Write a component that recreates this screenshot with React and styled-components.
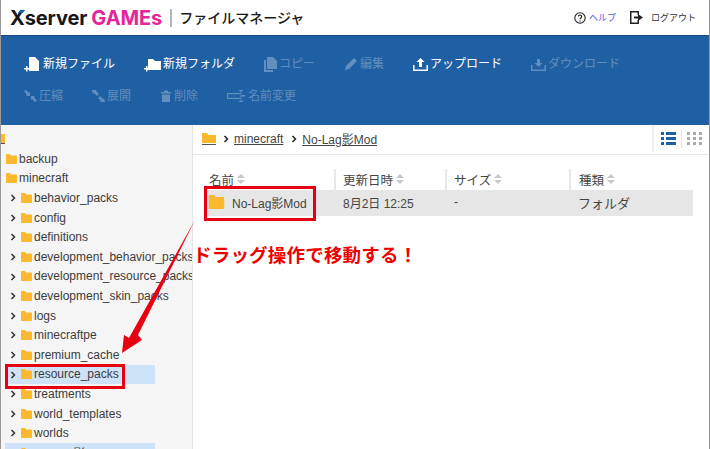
import React from 'react';
import styled, { createGlobalStyle } from 'styled-components';

const GlobalStyle = createGlobalStyle`
    html, body { margin: 0; padding: 0; background: #fff; }
    body { font-family: "Liberation Sans", "Noto Sans CJK JP", sans-serif; color: #333; }
`;

const Page = styled.div`
    position: relative;
    width: 710px;
    height: 449px;
    box-sizing: border-box;
    border-left: 1px solid #999;
    border-right: 1px solid #999;
    overflow: hidden;
    display: flex;
    flex-direction: column;
    background: #fff;
`;

const Header = styled.header`
    height: 35px;
    flex: none;
    display: flex;
    align-items: center;
    padding: 0 13px 0 9px;
    background: #fff;
`;

const Logo = styled.div`
    font-family: Inter, "Liberation Sans", sans-serif;
    font-weight: 700;
    font-size: 20px;
    letter-spacing: -0.1px;
    color: #16161a;
    white-space: nowrap;
`;

const LogoGames = styled.span`
    color: #e5259b;
    margin-left: 4px;
`;

const LogoX = styled.span`
    position: relative;
    &::after {
        content: '';
        position: absolute;
        left: 9px;
        top: 4px;
        width: 5px;
        height: 3px;
        background: #1f5fa3;
        transform: skewX(-40deg);
    }
`;

const Title = styled.div`
    margin-left: 8px;
    padding-left: 7px;
    border-left: 2px solid #b5b5b5;
    font-size: 14px;
    line-height: 18px;
    font-weight: 500;
    color: #1a1a1a;
    white-space: nowrap;
`;

const HeadLinks = styled.nav`
    margin-left: auto;
    display: flex;
    align-items: center;
`;

const HeadLink = styled.a`
    display: flex;
    align-items: center;
    gap: ${({ $gap }) => $gap}px;
    margin-left: ${({ $left }) => $left}px;
    font-size: 9px;
    color: ${({ $color }) => $color};
    white-space: nowrap;
`;

const Toolbar = styled.div`
    height: 90px;
    flex: none;
    box-sizing: border-box;
    border-top: 1px solid #174a80;
    background: #1f5fa3;
    padding: 19px 0 0 23px;
    display: flex;
    flex-direction: column;
    gap: 14px;
`;

const ToolRow = styled.div`
    display: flex;
    gap: 29px;
    height: 18px;
`;

const ToolButton = styled.button`
    display: flex;
    align-items: center;
    gap: 2px;
    padding: 0;
    border: none;
    background: none;
    font: inherit;
    font-size: 12px;
    line-height: 18px;
    white-space: nowrap;
    color: ${({ $off }) => ($off ? 'rgba(255,255,255,.3)' : '#fff')};
    svg { flex: none; fill: currentColor; }
`;

const Body = styled.div`
    flex: 1;
    display: flex;
    min-height: 0;
`;

const Sidebar = styled.aside`
    width: 192px;
    flex: none;
    box-sizing: border-box;
    border-right: 1px solid #e4e4e4;
    background: #f5f5f5;
    overflow: hidden;
    padding-top: 24px;
    position: relative;
`;

const TreeRow = styled.div`
    height: 19.6px;
    box-sizing: border-box;
    width: ${({ $hit }) => ($hit ? '150px' : 'auto')};
    margin-left: ${({ $hit }) => ($hit ? '4px' : '0')};
    padding-left: ${({ $depth, $hit }) => ($depth ? 20 : 5) - ($hit ? 4 : 0)}px;
    display: flex;
    align-items: center;
    gap: 2px;
    position: relative;
    font-size: 12px;
    white-space: nowrap;
    color: #3c3c3c;
    background: ${({ $hit }) => ($hit ? '#cfe3f8' : 'transparent')};
`;

const Chevron = styled.svg`
    position: absolute;
    left: ${({ $hit }) => ($hit ? 5 : 9)}px;
    top: 6px;
`;

const CutFolder = styled.div`
    position: absolute;
    left: -1px;
    top: 9px;
    width: 5px;
    height: 9px;
    background: #fdb92e;
    border-bottom: 1px solid #555;
`;

const Main = styled.main`
    flex: 1;
    min-width: 0;
    display: flex;
    flex-direction: column;
`;

const Crumbs = styled.div`
    height: 30px;
    flex: none;
    box-sizing: border-box;
    border-bottom: 1px solid #e6e6e6;
    display: flex;
    align-items: center;
    padding: 0 0 2px 9px;
`;

const CrumbFolder = styled.svg`
    flex: none;
    margin-right: 7px;
`;

const CrumbLink = styled.a`
    font-size: 12px;
    color: #444;
    text-decoration: underline;
    margin-left: 4px;
    margin-right: 8px;
    white-space: nowrap;
`;

const ViewSwitch = styled.div`
    margin-left: auto;
    height: 100%;
    border-left: 2px solid #eee;
    display: flex;
    align-items: center;
    padding: 0 7px 0 7px;
    gap: 5px;
`;

const ViewDivider = styled.i`
    width: 1px;
    height: 18px;
    background: #e4e4e4;
`;

const Table = styled.div`
    margin: 14px 0 0 11px;
    width: 489px;
`;

const GridRow = styled.div`
    display: grid;
    grid-template-columns: 130px 111px 124px 124px;
    align-items: center;
    height: ${({ $h }) => $h}px;
    background: ${({ $hit }) => ($hit ? '#e6e6e6' : 'transparent')};
`;

const HeadCell = styled.div`
    height: 100%;
    box-sizing: border-box;
    display: flex;
    align-items: center;
    gap: 3px;
    padding: 0 0 1px 5px;
    font-size: 12.5px;
    color: #444;
    & + & { border-left: 2px solid #e8e8e8; padding-left: 7px; }
    &:last-child { padding-left: 8px; }
`;

const Cell = styled.div`
    display: flex;
    align-items: center;
    gap: 7px;
    padding-left: ${({ $pad }) => $pad}px;
    padding-bottom: 2px;
    font-size: ${({ $size }) => $size || 12}px;
    color: #444;
    white-space: nowrap;
`;

const RedBox = styled.div`
    position: absolute;
    box-sizing: border-box;
    border: 3px solid #e60012;
    left: ${({ $x }) => $x}px;
    top: ${({ $y }) => $y}px;
    width: ${({ $w }) => $w}px;
    height: ${({ $h }) => $h}px;
`;

const Callout = styled.div`
    position: absolute;
    left: 192px;
    top: 243px;
    font-size: 18.500px;
    line-height: 26px;
    font-weight: 700;
    letter-spacing: 0.2px;
    color: #ee0000;
    white-space: nowrap;
`;

const ArrowArt = styled.svg`
    position: absolute;
    left: -1px;
    top: 0;
    pointer-events: none;
`;

const FileIcon = () => (
    <svg width="17" height="18" viewBox="0 0 17 18">
        <path d="M5 2h6l4 4v10H5z" />
        <path d="M0 13h2v-2h1.500v2h2v1.500h-2v2H2v-2H0z" />
    </svg>
);
const NewFolderIcon = () => (
    <svg width="17" height="18" viewBox="0 0 17 18">
        <path d="M4 4h5l2 2h6v9H4z" />
        <path d="M0 13h2v-2h1.500v2h2v1.500h-2v2H2v-2H0z" />
    </svg>
);
const CopyIcon = () => (
    <svg width="13" height="16" viewBox="0 0 13 16">
        <path d="M3 1h6l4 4v8H3z" />
        <path d="M0 4h2v10h7v2H0z" />
    </svg>
);
const PenIcon = () => (
    <svg width="14" height="16" viewBox="0 0 14 16">
        <path d="M10 2l3 3-8 8-4 1 1-4z" />
    </svg>
);
const TrayIcon = ({ down }) => (
    <svg width="15" height="16" viewBox="0 0 15 16">
        <path d="M0 9h1.500v4.500h12V9H15v6H0z" />
        {down
            ? <path d="M6 3h3v4h2.500l-4 4-4-4H6z" />
            : <path d="M7.500 2l4 4H9v5H6V6H3.500z" />}
    </svg>
);
const SqueezeIcon = () => (
    <svg width="13" height="16" viewBox="0 0 13 16">
        <path d="M0 3l2-1 3 3 1-1 0 4-4 0 1-1zM13 13l-2 1-3-3-1 1 0-4 4 0-1 1z" />
    </svg>
);
const ExpandIcon = () => (
    <svg width="13" height="16" viewBox="0 0 13 16">
        <path d="M0 2h5L4 3l3 3-2 2-3-3-1 1zM13 14H8l1-1-3-3 2-2 3 3 1-1z" />
    </svg>
);
const TrashIcon = () => (
    <svg width="12" height="16" viewBox="0 0 12 16">
        <path d="M1 4h10v1.500H1zM4 2.500h4V4H4zM2 6.500h8V14H2z" />
    </svg>
);
const RenameIcon = () => (
    <svg width="19" height="16" viewBox="0 0 19 16">
        <path d="M0 5h13v1.200H1.200v3.600H13V11H0z" />
        <path d="M12 2h4v1h-1.500v10H16v1h-4v-1h1.500V3H12z" />
        <path d="M15 7h3v1.500h-3z" />
    </svg>
);

const FolderIcon = ({ w = 11, h = 10 }) => (
    <svg width={w} height={h} viewBox="0 0 11 10" style={{ flex: 'none' }}>
        <path d="M0 1a1 1 0 0 1 1-1h3l1 1.500h5a1 1 0 0 1 1 1V9a1 1 0 0 1-1 1H1a1 1 0 0 1-1-1z" fill="#fdb92e" />
    </svg>
);

const ChevronRight = ({ hit }) => (
    <Chevron $hit={hit} width="7" height="8" viewBox="0 0 7 8">
        <path d="M1.500 1l3 3-3 3" fill="none" stroke="#333" strokeWidth="1.500" />
    </Chevron>
);

const CrumbArrow = () => (
    <svg width="7" height="8" viewBox="0 0 7 8" style={{ flex: 'none' }}>
        <path d="M1.500 1l3 3-3 3" fill="none" stroke="#222" strokeWidth="1.500" />
    </svg>
);

const SortMark = () => (
    <svg width="8" height="10" viewBox="0 0 8 10" style={{ flex: 'none' }}>
        <path d="M4 0l4 4H0zM4 10L0 6h8z" fill="#c8c8c8" />
    </svg>
);

const firstRow = [
    { label: '新規ファイル', Icon: FileIcon },
    { label: '新規フォルダ', Icon: NewFolderIcon },
    { label: 'コピー', Icon: CopyIcon, off: true },
    { label: '編集', Icon: PenIcon, off: true },
    { label: 'アップロード', Icon: TrayIcon },
    { label: 'ダウンロード', Icon: () => <TrayIcon down />, off: true },
];

const secondRow = [
    { label: '圧縮', Icon: SqueezeIcon, off: true },
    { label: '展開', Icon: ExpandIcon, off: true },
    { label: '削除', Icon: TrashIcon, off: true },
    { label: '名前変更', Icon: RenameIcon, off: true },
];

const folders = [
    { name: 'backup', depth: 0 },
    { name: 'minecraft', depth: 0 },
    { name: 'behavior_packs', depth: 1 },
    { name: 'config', depth: 1 },
    { name: 'definitions', depth: 1 },
    { name: 'development_behavior_packs', depth: 1 },
    { name: 'development_resource_packs', depth: 1 },
    { name: 'development_skin_packs', depth: 1 },
    { name: 'logs', depth: 1 },
    { name: 'minecraftpe', depth: 1 },
    { name: 'premium_cache', depth: 1 },
    { name: 'resource_packs', depth: 1, hit: true },
    { name: 'treatments', depth: 1 },
    { name: 'world_templates', depth: 1 },
    { name: 'worlds', depth: 1 },
    { name: 'No-Lag影Mod', depth: 1, hit: true },
];

const columns = ['名前', '更新日時', 'サイズ', '種類'];

const App = () => (
    <>
        <GlobalStyle />
        <Page>
            <Header>
                <Logo><LogoX>X</LogoX>server<LogoGames>GAMEs</LogoGames></Logo>
                <Title>ファイルマネージャ</Title>
                <HeadLinks>
                    <HeadLink $color="#5a55e0" $gap={3}>
                        <svg width="12" height="12" viewBox="0 0 12 12">
                            <circle cx="6" cy="6" r="5.200" fill="none" stroke="#222" strokeWidth="1.100" />
                            <path d="M4.300 4.600a1.700 1.600 0 1 1 2.600 1.400c-.6.400-.9.700-.9 1.300" fill="none" stroke="#222" strokeWidth="1.100" />
                            <circle cx="6" cy="9" r=".7" fill="#222" />
                        </svg>
                        ヘルプ
                    </HeadLink>
                    <HeadLink $color="#333" $gap={8} $left={14}>
                        <svg width="13" height="13" viewBox="0 0 13 13">
                            <path d="M0 0h9v4H7.500V1.500h-6v10h6V9H9v4H0z" fill="#222" />
                            <path d="M4 5.500h4V3l5 3.500L8 10V7.500H4z" fill="#222" />
                        </svg>
                        ログアウト
                    </HeadLink>
                </HeadLinks>
            </Header>

            <Toolbar>
                <ToolRow>
                    {firstRow.map(({ label, Icon, off }) => (
                        <ToolButton key={label} $off={off}><Icon />{label}</ToolButton>
                    ))}
                </ToolRow>
                <ToolRow>
                    {secondRow.map(({ label, Icon, off }) => (
                        <ToolButton key={label} $off={off}><Icon />{label}</ToolButton>
                    ))}
                </ToolRow>
            </Toolbar>

            <Body>
                <Sidebar>
                    <CutFolder />
                    {folders.map(({ name, depth, hit }) => (
                        <TreeRow key={name} $depth={depth} $hit={hit}>
                            {depth > 0 && <ChevronRight hit={hit} />}
                            <FolderIcon />
                            {name}
                        </TreeRow>
                    ))}
                </Sidebar>

                <Main>
                    <Crumbs>
                        <CrumbFolder width="14" height="14" viewBox="0 0 14 14">
                            <path d="M0 1h5l1.500 2H14v8H0z" fill="#fdb92e" />
                            <path d="M0 12.500h14" stroke="#555" />
                        </CrumbFolder>
                        <CrumbArrow />
                        <CrumbLink>minecraft</CrumbLink>
                        <CrumbArrow />
                        <CrumbLink>No-Lag影Mod</CrumbLink>
                        <ViewSwitch>
                            <svg width="15" height="13" viewBox="0 0 15 13">
                                <path d="M0 0h3v3H0zM5 0h10v3H5zM0 5h3v3H0zM5 5h10v3H5zM0 10h3v3H0zM5 10h10v3H5z" fill="#1f5fa3" />
                            </svg>
                            <ViewDivider />
                            <svg width="15" height="13" viewBox="0 0 15 13">
                                <path d="M0 0h3v3H0zM6 0h3v3H6zM12 0h3v3h-3zM0 5h3v3H0zM6 5h3v3H6zM12 5h3v3h-3zM0 10h3v3H0zM6 10h3v3H6zM12 10h3v3h-3z" fill="#aaa" />
                            </svg>
                        </ViewSwitch>
                    </Crumbs>

                    <Table>
                        <GridRow $h={21}>
                            {columns.map(name => (
                                <HeadCell key={name}>{name}<SortMark /></HeadCell>
                            ))}
                        </GridRow>
                        <GridRow $h={26} $hit>
                            <Cell $pad={4}>
                                <FolderIcon w={17} h={14} />
                                No-Lag影Mod
                            </Cell>
                            <Cell $pad={9}>8月2日 12:25</Cell>
                            <Cell $pad={9}>-</Cell>
                            <Cell $pad={9} $size={13}>フォルダ</Cell>
                        </GridRow>
                    </Table>
                </Main>
            </Body>

            <ArrowArt width="710" height="449" viewBox="0 0 710 449">
                <polygon points="195,220 138,335 142,340 122,353 124,335 129,338" fill="#e60012" />
            </ArrowArt>
            <RedBox $x={203} $y={186} $w={112} $h={35} />
            <RedBox $x={4} $y={364} $w={120} $h={25} />
            <Callout>ドラッグ操作で移動する！</Callout>
        </Page>
    </>
);

export default App;
